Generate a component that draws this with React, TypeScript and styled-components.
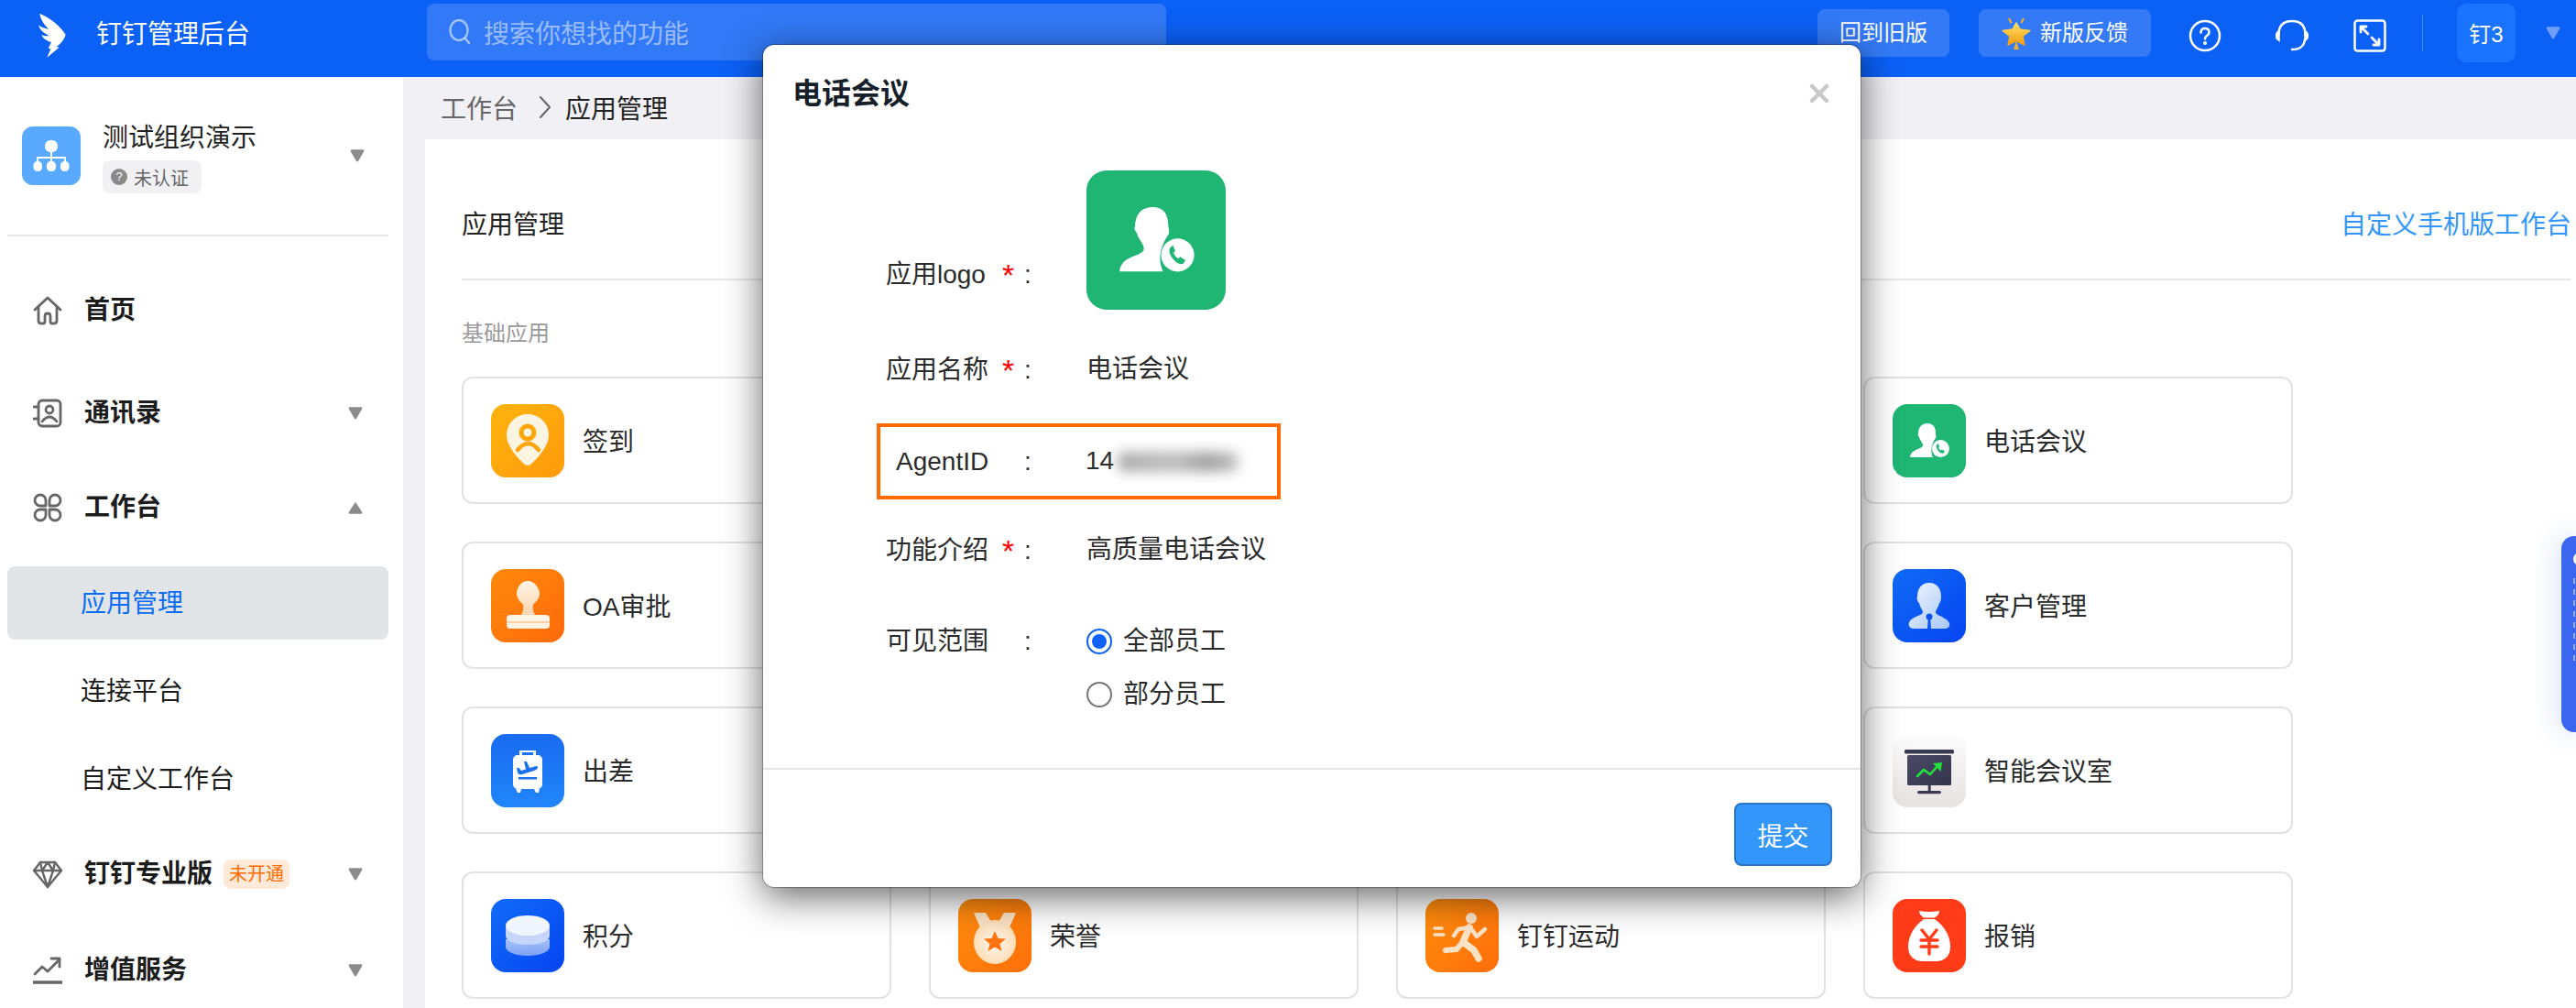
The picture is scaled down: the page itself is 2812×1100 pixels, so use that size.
import React from 'react';
import styled, { createGlobalStyle } from 'styled-components';

const GlobalStyle = createGlobalStyle`
  html, body { margin: 0; padding: 0; overflow: hidden; background: #f0f0f5; }
  body { font-family: "Liberation Sans", "Noto Sans CJK SC", sans-serif; color: #222; }
  * { box-sizing: border-box; }
`;

const Page = styled.div`
  width: 2812px; height: 1100px; position: relative; overflow: hidden;
  display: flex; flex-direction: column; background: #f0f0f5;
`;

/* ---------- top bar ---------- */
const TopBar = styled.header`
  height: 84px; flex: none; background: #0b60f6; display: flex; align-items: center;
  padding: 0 16px 12px 40px; color: #fff;
`;
const BrandMark = styled.svg`width: 35px; height: 53px; margin-top: 5px; flex: none;`;
const BrandName = styled.div`margin: 3px 0 0 30px; width: 361px; font-size: 28px; line-height: 40px;`;
const SearchBox = styled.div`
  width: 807px; height: 62px; border-radius: 8px; background: rgba(255,255,255,.16);
  display: flex; align-items: center; padding-left: 24px; gap: 14px; margin-top: -2px;
  font-size: 28px; color: rgba(255,255,255,.5);
`;
const TopActions = styled.div`margin-left: auto; display: flex; align-items: center;`;
const TopButton = styled.div<{ $w: number; $ml?: number }>`
  width: ${p => p.$w}px; margin-left: ${p => p.$ml ?? 0}px; height: 52px; border-radius: 8px;
  background: rgba(255,255,255,.17); display: flex; align-items: center; justify-content: center;
  gap: 10px; font-size: 24px; line-height: 32px; color: #fff;
`;
const TopIcon = styled.svg<{ $ml: number }>`width: 36px; height: 36px; margin: 5px 0 0 ${p => p.$ml}px; flex: none;`;
const TopDivider = styled.div`width: 1px; height: 40px; background: rgba(255,255,255,.25); margin-left: 39px;`;
const OrgChip = styled.div`
  width: 64px; height: 64px; margin-left: 37px; padding-bottom: 2px; border-radius: 10px; background: #1a74ff;
  display: flex; align-items: center; justify-content: center; font-size: 24px;
`;
const ChipCaret = styled.svg`width: 18px; height: 16px; margin-left: 32px; flex: none;`;

/* ---------- shell ---------- */
const Shell = styled.div`flex: 1; min-height: 0; display: flex;`;
const Sidebar = styled.aside`width: 440px; flex: none; background: #fff; display: flex; flex-direction: column;`;
const OrgHeader = styled.div`
  height: 174px; margin: 0 16px 0 8px; padding: 0 25px 0 16px; flex: none;
  border-bottom: 2px solid #e6e8eb; display: flex; align-items: center;
`;
const OrgLogo = styled.div`
  width: 64px; height: 64px; border-radius: 12px; background: #59a9ff; flex: none;
  display: flex; align-items: center; justify-content: center;
`;
const OrgText = styled.div`margin-left: 24px; display: flex; flex-direction: column; gap: 4px; flex: 1; padding-top: 2px;`;
const OrgName = styled.div`font-size: 28px; line-height: 40px; color: #222;`;
const AuthTag = styled.div`
  width: 108px; height: 36px; border-radius: 8px; background: #f1f1f4; display: flex; align-items: center;
  padding-left: 9px; gap: 7px; font-size: 20px; color: #666;
`;
const AuthMark = styled.span`
  width: 18px; height: 18px; border-radius: 50%; background: #8a8a8a; color: #fff; font-size: 13px;
  line-height: 18px; text-align: center; flex: none;
`;
const MenuItem = styled.div<{ $top: number; $sub?: boolean; $active?: boolean }>`
  height: 80px; flex: none; margin: ${p => p.$top}px 16px 0 8px; border-radius: 8px;
  padding: 2px 27px 0 ${p => (p.$sub ? 80 : 28)}px; display: flex; align-items: center;
  background: ${p => (p.$active ? '#e2e5e8' : 'transparent')};
  color: ${p => (p.$active ? '#0b6cf6' : '#1c1c1c')};
  font-size: 28px; line-height: 40px; font-weight: ${p => (p.$sub ? 400 : 600)};
`;
const MenuIcon = styled.svg`width: 32px; height: 32px; margin-right: 24px; flex: none;`;
const Caret = styled.svg`width: 18px; height: 16px; margin-left: auto; flex: none;`;
const OpenBadge = styled.span`
  margin-left: 12px; width: 72px; height: 32px; border-radius: 8px; background: #ffe9d8; color: #ff6d00;
  font-size: 20px; line-height: 32px; text-align: center; font-weight: 400;
`;

const Main = styled.main`flex: 1; min-width: 0; padding-left: 24px; display: flex; flex-direction: column;`;
const Crumbs = styled.nav`
  height: 68px; flex: none; padding: 0 0 2px 17px; display: flex; align-items: center; font-size: 28px; color: #666;
`;
const CrumbArrow = styled.svg`width: 16px; height: 26px; margin: 0 14px 0 22px;`;
const CrumbCurrent = styled.span`color: #222;`;
const Panel = styled.section`flex: 1; background: #fff; padding: 0 5px 0 40px; display: flex; flex-direction: column;`;
const PanelHead = styled.div`
  height: 154px; flex: none; padding-top: 30px; border-bottom: 2px solid #e8e8ea;
  display: flex; align-items: center; justify-content: space-between; font-size: 28px; color: #222;
`;
const PanelLink = styled.span`color: #3296fa;`;
const SectionLabel = styled.div`margin: 42px 0 31px; font-size: 24px; line-height: 32px; color: #999;`;
const CardGrid = styled.div`
  display: grid; grid-template-columns: repeat(4, 469px); grid-auto-rows: 139px; column-gap: 41px; row-gap: 41px;
`;
const AppCard = styled.div`
  border: 2px solid #e2e2e4; border-radius: 12px; padding-left: 30px; display: flex; align-items: center;
  gap: 20px; font-size: 28px; color: #2b2b2b; background: #fff;
`;
const CardName = styled.span`margin-bottom: 2px;`;
const IconTile = styled.div<{ $size: number; $radius: number }>`
  width: ${p => p.$size}px; height: ${p => p.$size}px; border-radius: ${p => p.$radius}px; overflow: hidden; flex: none;
  & > svg { display: block; width: 100%; height: 100%; }
`;
const Floater = styled.div`
  position: absolute; right: 0; top: 585px; width: 16px; height: 214px; border-radius: 14px 0 0 14px; overflow: hidden;
  background: #3d66f0; box-shadow: 0 0 30px rgba(61,102,240,.3); padding: 18px 0 0 13px;
  display: flex; flex-direction: column; gap: 14px;
`;
const FloaterDot = styled.span`width: 14px; height: 14px; border-radius: 50%; background: #fff; flex: none;`;
const FloaterTrace = styled.span`width: 2px; height: 92px; background: repeating-linear-gradient(rgba(223,230,255,.55) 0 6px, transparent 6px 12px); flex: none;`;

/* ---------- modal ---------- */
const Modal = styled.div`
  position: absolute; left: 833px; top: 49px; width: 1198px; height: 919px; background: #fff; border-radius: 12px;
  box-shadow: 0 0 0 1px rgba(0,0,0,.28), 0 10px 42px rgba(0,0,0,.62);
  display: flex; flex-direction: column;
`;
const ModalHead = styled.div`
  height: 106px; flex: none; padding: 0 34px 0 32px; display: flex; align-items: center; justify-content: space-between;
`;
const ModalTitle = styled.h2`margin: 0; font-size: 32px; line-height: 44px; font-weight: 600; color: #171f2b;`;
const CloseIcon = styled.svg`width: 22px; height: 22px;`;
const ModalBody = styled.div`flex: 1; padding: 31px 0 0 134px; display: flex; flex-direction: column; font-size: 28px; color: #2b2b2b;`;
const FormRow = styled.div<{ $h: number; $pt?: number; $start?: boolean }>`
  height: ${p => p.$h}px; padding-top: ${p => p.$pt ?? 0}px; flex: none; display: flex;
  align-items: ${p => (p.$start ? 'flex-start' : 'center')};
`;
const LogoRow = styled.div`height: 152px; flex: none; display: flex; align-items: flex-end;`;
const FieldLabel = styled.div<{ $offset?: number; $nudge?: number }>`
  width: 219px; flex: none; display: flex; line-height: 36px; margin-bottom: ${p => p.$offset ?? 0}px;
  padding-top: ${p => p.$nudge ?? 0}px;
`;
const LabelText = styled.span`width: 127px; flex: none;`;
const Required = styled.span`width: 24px; flex: none; color: #f00; font-size: 34px; line-height: 36px;`;
const FieldValue = styled.div`line-height: 36px; display: flex; align-items: center;`;
const HighlightRow = styled.div`
  width: 441px; height: 83px; flex: none; margin-left: -10px; padding-left: 17px; border: 4px solid #ff6a00;
  display: flex; align-items: center;
`;
const HighlightLabel = styled.div`width: 207px; flex: none; display: flex; line-height: 36px;`;
const HighlightName = styled.span`width: 140px; flex: none;`;
const Digits = styled.span`margin-top: -2px;`;
const BlurredDigits = styled.span`
  width: 132px; height: 22px; margin-left: 4px; border-radius: 8px; filter: blur(7px);
  background: linear-gradient(90deg, #a9a9a9, #bdbdbd 45%, #a0a0a0 75%, #c4c4c4);
`;
const RadioStack = styled.div`display: flex; flex-direction: column; gap: 22px; margin-top: 0;`;
const RadioLine = styled.label`display: flex; align-items: center; gap: 12px; line-height: 36px;`;
const RadioDot = styled.span<{ $on?: boolean }>`
  width: 28px; height: 28px; border-radius: 50%; flex: none; background: #fff;
  border: 2px solid ${p => (p.$on ? '#0b62f5' : '#777')};
  display: flex; align-items: center; justify-content: center;
  &::after { content: ""; width: 16px; height: 16px; border-radius: 50%; background: ${p => (p.$on ? '#0b62f5' : 'transparent')}; }
`;
const ModalFoot = styled.div`
  height: 130px; flex: none; border-top: 2px solid #e5e5e5; padding: 36px 31px 0 0; display: flex; justify-content: flex-end; align-items: flex-start;
`;
const SubmitButton = styled.button`
  width: 107px; height: 69px; border-radius: 8px; border: 2px solid #2b74c6; background: #3296fa; color: #fff;
  font: inherit; font-size: 28px; padding: 0;
`;

/* ---------- drawings ---------- */
const stroke = { fill: 'none', stroke: '#666', strokeWidth: 2.8, strokeLinecap: 'round', strokeLinejoin: 'round' } as const;
const CaretPath = ({ up, color = '#8c8c8c' }: { up?: boolean; color?: string }) => (
  <path d={up ? 'M8 1.5 L14.5 11.5 Q15 13 13.5 13 H2.5 Q1 13 1.5 11.5Z' : 'M2.5 1 H13.5 Q15 1 14.5 2.5 L9 12 Q8 13.4 7 12 L1.500 2.500 Q1 1 2.5 1Z'} fill={color} />
);
const MenuCaret = ({ up }: { up?: boolean }) => <Caret viewBox="0 0 16 14"><CaretPath up={up} /></Caret>;

const HomeIcon = () => (
  <MenuIcon viewBox="0 0 32 32"><g {...stroke}>
    <path d="M2 15 L16 2 L30 15" />
    <path d="M6 12 V27 Q6 30 9 30 H11 Q13 30 13 28 V22 Q13 19 16 19 Q19 19 19 22 V28 Q19 30 21 30 H23 Q26 30 26 27 V12" />
  </g></MenuIcon>
);
const ContactIcon = () => (
  <MenuIcon viewBox="0 0 32 32"><g {...stroke}>
    <rect x="6" y="2" width="24" height="28" rx="4" /><path d="M1 9 H6 M1 22 H6" />
    <circle cx="18" cy="12" r="4" /><path d="M10 25 Q18 15 26 25" />
  </g></MenuIcon>
);
const WorkIcon = () => (
  <MenuIcon viewBox="0 0 32 32"><g {...stroke}>
    <path d="M14 14 H8 A6 6 0 1 1 14 8Z" /><path d="M18 14 V8 A6 6 0 1 1 24 14Z" />
    <path d="M14 18 V24 A6 6 0 1 1 8 18Z" /><path d="M18 18 H24 A6 6 0 1 1 18 24Z" />
  </g></MenuIcon>
);
const GemIcon = () => (
  <MenuIcon viewBox="0 0 32 32"><g {...stroke} strokeWidth={2.4}>
    <path d="M8 3 H24 L31 12 L16 30 L1 12Z" /><path d="M1 12 H31 M10 12 L16 30 L22 12 M8 3 L10 12 L16 3 L22 12 L24 3" />
  </g></MenuIcon>
);
const TrendIcon = () => (
  <MenuIcon viewBox="0 0 32 32"><g {...stroke}>
    <path d="M2 20 L10 12 L16 17 L29 4" /><path d="M20 3 H29 V12" /><path d="M1 29 H31" strokeWidth={3.4} />
  </g></MenuIcon>
);

const PhonePerson = () => (
  <svg viewBox="0 0 80 80">
    <rect width="80" height="80" fill="#1fb573" />
    <path d="M38 21 C31 21 28 26 28 32 C27 33 28 35 29 36 C30 40 33 42 33 45 C33 48 26 49 22 52 C20 54 19 56 19 58 L44 58 C41 52 42 44 47 37 C48 35 47 33 47 32 C47 26 45 21 38 21Z" fill="#fff" />
    <circle cx="52.400" cy="48.600" r="9.500" fill="#fff" />
    <path d="M48.500 44 c-1.300 1.200 -1.200 3.500 .8 6.300 c2 2.800 4.300 4 6.300 3.300 l1.300 -2 l-3 -2 l-1.200 1 c-1.200 -.6 -2.200 -2 -2.700 -3.300 l1 -1 l-1.300 -3.300z" fill="#1fb573" />
  </svg>
);
const CheckinArt = () => (
  <svg viewBox="0 0 80 80">
    <defs><linearGradient id="gCheck" x1="0" y1="0" x2="1" y2="1"><stop offset="0" stopColor="#ffb40e" /><stop offset="1" stopColor="#ff9a0b" /></linearGradient></defs>
    <rect width="80" height="80" fill="url(#gCheck)" />
    <path d="M40 11 C27 11 17 21 17 34 C17 46 30 60 37 66 Q40 68 43 66 C50 60 63 46 63 34 C63 21 53 11 40 11Z" fill="#fdf5e1" />
    <circle cx="40" cy="31" r="7" fill="none" stroke="#ffa50c" strokeWidth="5" />
    <path d="M29 50 Q40.500 36 52 50" fill="none" stroke="#ffa50c" strokeWidth="4.500" strokeLinecap="round" />
  </svg>
);
const StampArt = () => (
  <svg viewBox="0 0 80 80">
    <defs><linearGradient id="gStamp" x1="0" y1="0" x2="1" y2="1"><stop offset="0" stopColor="#ff8a0c" /><stop offset="1" stopColor="#ff6a0a" /></linearGradient>
      <linearGradient id="gHead" x1="0" y1="0" x2="0" y2="1"><stop offset="0" stopColor="#fff4e6" /><stop offset="1" stopColor="#fcd5ae" /></linearGradient></defs>
    <rect width="80" height="80" fill="url(#gStamp)" />
    <path d="M40 13 C33 13 28 20 28 27 C28 33 33 36 35 39 C36 42 35 46 33 50 H48 C46 46 45 42 46 39 C48 36 53 33 53 27 C53 20 47 13 40 13Z" fill="url(#gHead)" />
    <rect x="17" y="50" width="47" height="15" rx="4" fill="#fff3e6" />
    <rect x="17" y="57" width="47" height="2" fill="#fcd1a8" />
  </svg>
);
const TripArt = () => (
  <svg viewBox="0 0 80 80">
    <defs><linearGradient id="gTrip" x1="0" y1="0" x2="0" y2="1"><stop offset="0" stopColor="#196bf0" /><stop offset="1" stopColor="#2186fa" /></linearGradient></defs>
    <rect width="80" height="80" fill="url(#gTrip)" />
    <path d="M31 23 V18 H49 V23 H46 V20 H34 V23Z" fill="#fff" />
    <rect x="24" y="23" width="32" height="37" rx="5" fill="#fff" />
    <path d="M27 60 H33 L32 64 H29Z M47 60 H53 L52 64 H49Z" fill="#fff" />
    <path d="M36 30 L39 30 L42 37 L49 35 Q51.500 35 51 37 Q50.500 39 47 40 L34 44 Q30 45 29 42 L28 37 L30.500 37 L33 40 L38 38.500Z" fill="#1a72f2" />
    <path d="M30 47 H50 V49.500 H30Z" fill="#1a72f2" />
  </svg>
);
const PointsArt = () => (
  <svg viewBox="0 0 80 80">
    <defs><linearGradient id="gPts" x1="0" y1="0" x2="1" y2="1"><stop offset="0" stopColor="#116cf8" /><stop offset="1" stopColor="#0544f0" /></linearGradient>
      <linearGradient id="gDisc" x1="0" y1="0" x2="0" y2="1"><stop offset="0" stopColor="#c2d4fb" /><stop offset="1" stopColor="#8fb0f5" /></linearGradient></defs>
    <rect width="80" height="80" fill="url(#gPts)" />
    <path d="M16 44 V52 C16 58 27 62 40 62 C53 62 64 58 64 52 V44Z" fill="url(#gDisc)" opacity=".85" />
    <path d="M16 29 V40 C16 46 27 50 40 50 C53 50 64 46 64 40 V29Z" fill="#c6d6fb" />
    <ellipse cx="40" cy="29" rx="24" ry="11" fill="#f1f5fe" />
  </svg>
);
const MedalArt = () => (
  <svg viewBox="0 0 80 80">
    <defs><linearGradient id="gMedal" x1="0" y1="0" x2="1" y2="1"><stop offset="0" stopColor="#ff8e0d" /><stop offset="1" stopColor="#ff6f0a" /></linearGradient>
      <radialGradient id="gCoin"><stop offset="0" stopColor="#fff6ec" /><stop offset="1" stopColor="#fcdfb9" /></radialGradient></defs>
    <rect width="80" height="80" fill="url(#gMedal)" />
    <path d="M17 15 H30 L40 32 L50 15 H63 L53 38 H27Z" fill="#fde3c6" />
    <ellipse cx="40" cy="47" rx="23" ry="24" fill="url(#gCoin)" />
    <path d="M40 35 L43.500 43 L52 43.500 L45.500 49 L47.500 57 L40 52.500 L32.500 57 L34.500 49 L28 43.500 L36.500 43Z" fill="#ff7410" />
  </svg>
);
const RunArt = () => (
  <svg viewBox="0 0 80 80">
    <defs><linearGradient id="gRun" x1="0" y1="0" x2="1" y2="1"><stop offset="0" stopColor="#ff8f0d" /><stop offset="1" stopColor="#ff6d0a" /></linearGradient></defs>
    <rect width="80" height="80" fill="url(#gRun)" />
    <circle cx="50" cy="21" r="6" fill="#fde3c6" />
    <g fill="none" stroke="#fde3c6" strokeLinecap="round" strokeLinejoin="round">
      <path strokeWidth="7.500" d="M48 31 L41 47 L53 56 L58 65" />
      <path strokeWidth="6" d="M41 47 L34 55 L22 56" />
      <path strokeWidth="4.500" d="M48 31 L36 33 L31 40" />
      <path strokeWidth="4.500" d="M49 31 L56 41 L65 33" />
      <path strokeWidth="3.500" d="M10 32 H18 M10 39 H20" />
    </g>
  </svg>
);
const ClientArt = () => (
  <svg viewBox="0 0 80 80">
    <defs><linearGradient id="gClient" x1="0" y1="0" x2="1" y2="1"><stop offset="0" stopColor="#116cf8" /><stop offset="1" stopColor="#0544f0" /></linearGradient>
      <linearGradient id="gBust" x1="0" y1="0" x2="1" y2="1"><stop offset="0" stopColor="#eef4fe" /><stop offset="1" stopColor="#a9c8f8" /></linearGradient></defs>
    <rect width="80" height="80" fill="url(#gClient)" />
    <path d="M40 15 C31 15 27 22 27 30 C26 31 27 36 29 37 C30 42 33 45 33 47 C33 50 26 51 22 54 C18 56 17 60 18 62 Q19 65 23 65 L57 65 Q61 65 62 62 C63 60 61 56 57 54 C53 51 47 50 47 47 C47 45 50 42 51 37 C53 36 53 31 53 30 C53 22 49 15 40 15Z" fill="url(#gBust)" />
    <circle cx="40" cy="52" r="3.500" fill="#0c55ef" />
    <path d="M38.800 53 H41.200 L42 65 H38Z" fill="#0c55ef" />
  </svg>
);
const RoomArt = () => (
  <svg viewBox="0 0 80 80">
    <defs><linearGradient id="gRoom" x1="0" y1="0" x2="0" y2="1"><stop offset="0" stopColor="#fdfdfd" /><stop offset="1" stopColor="#e5e2df" /></linearGradient>
      <linearGradient id="gScreen" x1="0" y1="0" x2="1" y2="1"><stop offset="0" stopColor="#4a4a68" /><stop offset="1" stopColor="#33334a" /></linearGradient></defs>
    <rect width="80" height="80" fill="url(#gRoom)" />
    <rect x="13" y="17" width="54" height="4.500" rx="1.500" fill="#3a3a52" />
    <rect x="16" y="23" width="48" height="33" rx="1.500" fill="url(#gScreen)" />
    <rect x="38.700" y="56" width="3" height="6" fill="#3a3a52" />
    <rect x="27" y="62" width="26" height="3.200" rx="1.600" fill="#3a3a52" />
    <path d="M27 46 L34 39 L41 44 L49 35" fill="none" stroke="#23e23c" strokeWidth="2.600" strokeLinecap="round" strokeLinejoin="round" />
    <path d="M44 32 L54 31 L52.500 41Z" fill="#23e23c" />
  </svg>
);
const BagArt = () => (
  <svg viewBox="0 0 80 80">
    <rect width="80" height="80" fill="#ff3c17" />
    <path d="M29 13 Q40 15 51 13 Q51 17 46 20.500 L34 20.500 Q29 17 29 13Z" fill="#fff" />
    <path d="M34 22 L46 22 C56 29 63 40 63 52 C63 62 57 68 47 68 L33 68 C23 68 17 62 17 52 C17 40 24 29 34 22Z" fill="#fff" />
    <path d="M32 34 L40 44 L48 34 M31 45 H49 M31 52 H49 M40 44 V60" fill="none" stroke="#ff3c17" strokeWidth="3.400" strokeLinecap="round" strokeLinejoin="round" />
  </svg>
);

type Card = { label?: string; art?: React.ReactNode };
const cards: Card[] = [
  { label: '签到', art: <CheckinArt /> }, {}, {}, { label: '电话会议', art: <PhonePerson /> },
  { label: 'OA审批', art: <StampArt /> }, {}, {}, { label: '客户管理', art: <ClientArt /> },
  { label: '出差', art: <TripArt /> }, {}, {}, { label: '智能会议室', art: <RoomArt /> },
  { label: '积分', art: <PointsArt /> }, { label: '荣誉', art: <MedalArt /> }, { label: '钉钉运动', art: <RunArt /> }, { label: '报销', art: <BagArt /> },
];

export default function App() {
  return (
    <>
      <GlobalStyle />
      <Page>
        <TopBar>
          <BrandMark viewBox="30 25 105 160">
            <path fill="#fff" d="M40 33 C72 46 112 78 125 103 C122 118 108 135 95 143 L104 145 L64 178 L76 150 L68 148 L78 128 C60 122 48 112 46 104 C58 108 66 108 72 107 C56 100 40 88 36 72 C48 80 60 84 70 85 C55 72 42 52 40 33Z" />
          </BrandMark>
          <BrandName>钉钉管理后台</BrandName>
          <SearchBox>
            <svg width="24" height="30" viewBox="0 0 24 30" fill="none" stroke="rgba(255,255,255,.55)" strokeWidth="2.400" strokeLinecap="round">
              <ellipse cx="11" cy="13" rx="9.500" ry="11" /><path d="M18 22 L22 27" />
            </svg>
            搜索你想找的功能
          </SearchBox>
          <TopActions>
            <TopButton $w={144}>回到旧版</TopButton>
            <TopButton $w={188} $ml={32}>
              <svg width="32" height="36" viewBox="0 0 32 36">
                <defs><linearGradient id="gStar" x1="0" y1="0" x2="0" y2="1"><stop offset="0" stopColor="#ffe36a" /><stop offset="1" stopColor="#f59a0c" /></linearGradient></defs>
                <path d="M16 7 L20 14 L31 15.500 L23 21.500 L25 31 L16 26.500 L7 31 L9 21.500 L1 15.500 L12 14Z" fill="url(#gStar)" stroke="url(#gStar)" strokeWidth="1.500" strokeLinejoin="round" />
                <path d="M8 2 L10.500 7 M24 2 L21.500 7 M16 30 L14.500 35 H17.500Z" stroke="#f5b024" strokeWidth="2" fill="#f59a0c" />
              </svg>
              新版反馈
            </TopButton>
            <TopIcon $ml={41} viewBox="0 0 36 36" fill="none" stroke="#fff" strokeWidth="2.500" strokeLinecap="round">
              <circle cx="18" cy="18" r="16" />
              <path d="M13.500 14.500 Q13.500 10 18 10 Q22.500 10 22.500 14 Q22.500 16.500 20 18 Q18 19.200 18 21.500" />
              <circle cx="18" cy="26" r=".8" fill="#fff" />
            </TopIcon>
            <TopIcon $ml={59} viewBox="0 0 36 36" fill="none" stroke="#fff" strokeWidth="2.500" strokeLinecap="round">
              <path d="M3.500 17 Q3.500 2 18 2 Q32.500 2 32.500 17" />
              <path d="M3.500 13.500 Q1 15 1 18 Q1 21 3.500 22.500Z M32.500 13.500 Q35 15 35 18 Q35 21 32.500 22.500Z" />
              <path d="M32 22 Q31 33 18 33" />
            </TopIcon>
            <TopIcon $ml={49} viewBox="0 0 36 36" fill="none" stroke="#fff" strokeWidth="2.500" strokeLinecap="round" strokeLinejoin="round">
              <rect x="1.500" y="1.500" width="33" height="33" rx="3" />
              <path d="M8 8 L16 16 M8 8 V14 M8 8 H14 M28 28 L20 20 M28 28 V22 M28 28 H22" strokeWidth="2.800" />
            </TopIcon>
            <TopDivider />
            <OrgChip>钉3</OrgChip>
            <ChipCaret viewBox="0 0 16 14"><CaretPath color="#6f9ff8" /></ChipCaret>
          </TopActions>
        </TopBar>
        <Shell>
          <Sidebar>
            <OrgHeader>
              <OrgLogo>
                <svg width="64" height="64" viewBox="0 0 64 64" fill="#fff">
                  <rect x="25" y="15" width="14" height="13" rx="6" />
                  <path d="M32 28 V34 M17 38 V34 H47 V38 M32 34 V38" stroke="#fff" strokeWidth="2" fill="none" />
                  <rect x="12.500" y="38" width="9.500" height="11" rx="4.500" />
                  <rect x="27" y="38" width="10" height="11" rx="4.500" />
                  <rect x="42" y="38" width="9.500" height="11" rx="4.500" />
                </svg>
              </OrgLogo>
              <OrgText>
                <OrgName>测试组织演示</OrgName>
                <AuthTag><AuthMark>?</AuthMark>未认证</AuthTag>
              </OrgText>
              <Caret viewBox="0 0 16 14"><CaretPath /></Caret>
            </OrgHeader>
            <MenuItem $top={40}><HomeIcon />首页</MenuItem>
            <MenuItem $top={32}><ContactIcon />通讯录<MenuCaret /></MenuItem>
            <MenuItem $top={23}><WorkIcon />工作台<MenuCaret up /></MenuItem>
            <MenuItem $top={25} $sub $active>应用管理</MenuItem>
            <MenuItem $top={16} $sub>连接平台</MenuItem>
            <MenuItem $top={16} $sub>自定义工作台</MenuItem>
            <MenuItem $top={23}><GemIcon />钉钉专业版<OpenBadge>未开通</OpenBadge><MenuCaret /></MenuItem>
            <MenuItem $top={25}><TrendIcon />增值服务<MenuCaret /></MenuItem>
          </Sidebar>
          <Main>
            <Crumbs>
              工作台
              <CrumbArrow viewBox="0 0 16 26" fill="none" stroke="#666" strokeWidth="2" strokeLinecap="round" strokeLinejoin="round">
                <path d="M3 2 L13 13 L3 24" />
              </CrumbArrow>
              <CrumbCurrent>应用管理</CrumbCurrent>
            </Crumbs>
            <Panel>
              <PanelHead>
                <span>应用管理</span>
                <PanelLink>自定义手机版工作台</PanelLink>
              </PanelHead>
              <SectionLabel>基础应用</SectionLabel>
              <CardGrid>
                {cards.map((c, i) => (
                  <AppCard key={i}>
                    {c.art && <IconTile $size={80} $radius={16}>{c.art}</IconTile>}
                    {c.label && <CardName>{c.label}</CardName>}
                  </AppCard>
                ))}
              </CardGrid>
            </Panel>
          </Main>
        </Shell>
        <Floater>
          <FloaterDot />
          <FloaterTrace />
        </Floater>
        <Modal>
          <ModalHead>
            <ModalTitle>电话会议</ModalTitle>
            <CloseIcon viewBox="0 0 22 22" fill="none" stroke="#c9c9c9" strokeWidth="4.500" strokeLinecap="round">
              <path d="M3 3 L19 19 M19 3 L3 19" />
            </CloseIcon>
          </ModalHead>
          <ModalBody>
            <LogoRow>
              <FieldLabel $offset={20}><LabelText>应用logo</LabelText><Required>*</Required>:</FieldLabel>
              <IconTile $size={152} $radius={22}><PhonePerson /></IconTile>
            </LogoRow>
            <FormRow $h={124} $pt={6}>
              <FieldLabel $nudge={2}><LabelText>应用名称</LabelText><Required>*</Required>:</FieldLabel>
              <FieldValue>电话会议</FieldValue>
            </FormRow>
            <HighlightRow>
              <HighlightLabel><HighlightName>AgentID</HighlightName>:</HighlightLabel>
              <FieldValue><Digits>14</Digits><BlurredDigits /></FieldValue>
            </HighlightRow>
            <FormRow $h={110}>
              <FieldLabel $nudge={2}><LabelText>功能介绍</LabelText><Required>*</Required>:</FieldLabel>
              <FieldValue>高质量电话会议</FieldValue>
            </FormRow>
            <FormRow $h={160} $pt={27} $start>
              <FieldLabel><LabelText>可见范围</LabelText><Required />:</FieldLabel>
              <RadioStack>
                <RadioLine><RadioDot $on />全部员工</RadioLine>
                <RadioLine><RadioDot />部分员工</RadioLine>
              </RadioStack>
            </FormRow>
          </ModalBody>
          <ModalFoot>
            <SubmitButton>提交</SubmitButton>
          </ModalFoot>
        </Modal>
      </Page>
    </>
  );
}
